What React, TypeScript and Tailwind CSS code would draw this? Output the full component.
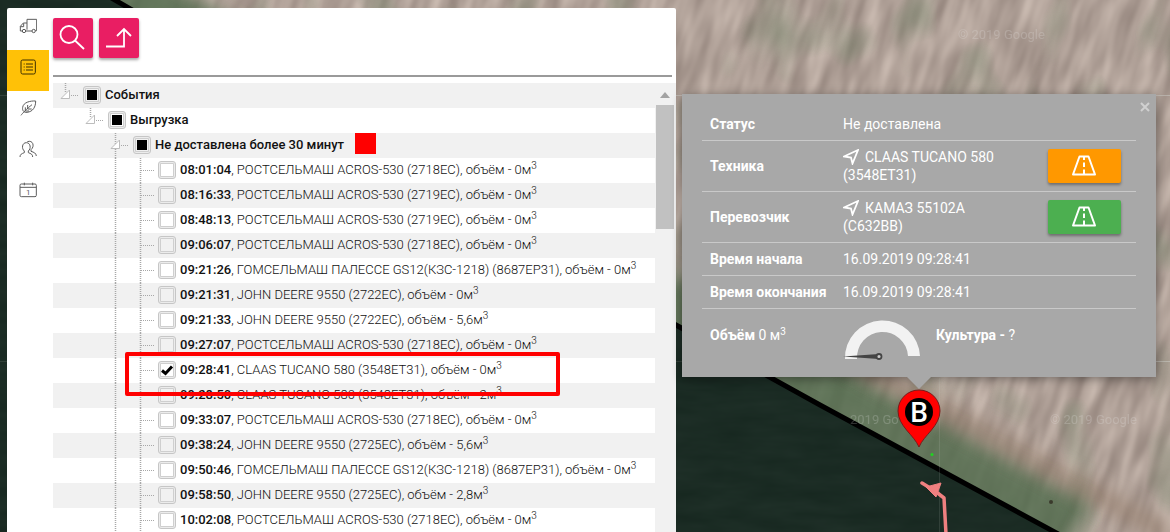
import { useEffect, useRef, useState } from "react";
import type { ReactNode } from "react";

type TreeEvent = {
  time: string;
  machine: string;
  volume: string;
  checked?: boolean;
};

const events: TreeEvent[] = [
  { time: "08:01:04", machine: "РОСТСЕЛЬМАШ ACROS-530 (2718ЕС)", volume: "0" },
  { time: "08:16:33", machine: "РОСТСЕЛЬМАШ ACROS-530 (2719ЕС)", volume: "0" },
  { time: "08:48:13", machine: "РОСТСЕЛЬМАШ ACROS-530 (2719ЕС)", volume: "0" },
  { time: "09:06:07", machine: "РОСТСЕЛЬМАШ ACROS-530 (2718ЕС)", volume: "0" },
  { time: "09:21:26", machine: "ГОМСЕЛЬМАШ ПАЛЕССЕ GS12(КЗС-1218) (8687ЕР31)", volume: "0" },
  { time: "09:21:31", machine: "JOHN DEERE 9550 (2722ЕС)", volume: "0" },
  { time: "09:21:33", machine: "JOHN DEERE 9550 (2722ЕС)", volume: "5,6" },
  { time: "09:27:07", machine: "РОСТСЕЛЬМАШ ACROS-530 (2718ЕС)", volume: "0" },
  { time: "09:28:41", machine: "CLAAS TUCANO 580 (3548ЕТ31)", volume: "0", checked: true },
  { time: "09:28:50", machine: "CLAAS TUCANO 580 (3548ЕТ31)", volume: "2" },
  { time: "09:33:07", machine: "РОСТСЕЛЬМАШ ACROS-530 (2718ЕС)", volume: "0" },
  { time: "09:38:24", machine: "JOHN DEERE 9550 (2725ЕС)", volume: "5,6" },
  { time: "09:50:46", machine: "ГОМСЕЛЬМАШ ПАЛЕССЕ GS12(КЗС-1218) (8687ЕР31)", volume: "0" },
  { time: "09:58:50", machine: "JOHN DEERE 9550 (2725ЕС)", volume: "2,8" },
  { time: "10:02:08", machine: "РОСТСЕЛЬМАШ ACROS-530 (2718ЕС)", volume: "0" },
];

const navItems: { label: string; icon: ReactNode }[] = [
  {
    label: "Техника",
    icon: (
      <>
        <path d="M24 38V7H53V41H49M39 42H20M10 42H4V28L13 18H24M4 29H14V19" />
        <circle cx="15" cy="42" r="5" />
        <circle cx="44" cy="42" r="5" />
      </>
    ),
  },
  {
    label: "События",
    icon: (
      <>
        <rect x="6" y="6" width="43" height="42" rx="5" />
        <path d="M14 18h3M14 27h3M14 36h3M21 18h21M21 27h21M21 36h21" />
      </>
    ),
  },
  {
    label: "Поля",
    icon: (
      <>
        <path d="M50 6C34 5 13 10 11 25C9 36 16 41 24 40C42 38 50 24 50 6Z" />
        <path d="M6 49C10 43 24 29 39 17M26 18V30H38M19 25V36H30" />
      </>
    ),
  },
  {
    label: "Сотрудники",
    icon: (
      <>
        <path d="M3 51C3 43 8 41 16 38V33C7 26 9 8 22 8C35 8 37 26 28 33V38C36 41 41 43 41 51" />
        <path d="M25 5C42 -1 48 19 36 29V34C45 37 51 39 52 48" />
      </>
    ),
  },
  {
    label: "Календарь",
    icon: (
      <>
        <rect x="3" y="9" width="49" height="38" rx="4" />
        <path d="M3 19H52M16 5V13M41 5V13" />
        <text x="28" y="42" textAnchor="middle" fontSize="24" fill="currentColor" stroke="none">
          1
        </text>
      </>
    ),
  },
];

function MapCanvas() {
  return (
    <svg
      className="absolute inset-0 h-full w-full"
      viewBox="0 0 1170 532"
      preserveAspectRatio="xMidYMid slice"
      aria-hidden="true"
    >
      <defs>
        <filter id="soil" x="0" y="0" width="100%" height="100%" colorInterpolationFilters="sRGB">
          <feTurbulence type="fractalNoise" baseFrequency="0.07 0.018" numOctaves="2" seed="8" />
          <feColorMatrix values="0.3 0 0 0 0.54  0.3 0 0 0 0.48  0.29 0 0 0 0.45  0 0 0 0 1" />
        </filter>
        <filter id="patches" x="0" y="0" width="100%" height="100%" colorInterpolationFilters="sRGB">
          <feTurbulence type="fractalNoise" baseFrequency="0.02 0.014" numOctaves="2" seed="5" />
          <feColorMatrix values="0 0 0 0 0.44  0 0 0 0 0.5  0 0 0 0 0.4  3 0 0 0 -1.600" />
        </filter>
        <filter id="crop" x="0" y="0" width="100%" height="100%" colorInterpolationFilters="sRGB">
          <feTurbulence type="fractalNoise" baseFrequency="0.02 0.08" numOctaves="3" seed="3" />
          <feColorMatrix values="0.04 0 0 0 0.085  0.04 0 0 0 0.15  0.04 0 0 0 0.12  0 0 0 0 1" />
        </filter>
        <filter id="soft">
          <feGaussianBlur stdDeviation="9" />
        </filter>
        <clipPath id="field">
          <path d="M0 0H112L676 325L820 404L1055 532H0Z" />
        </clipPath>
      </defs>
      <g transform="rotate(17 900 260)">
        <rect x="-100" y="-400" width="1700" height="1300" filter="url(#soil)" />
      </g>
      <rect width="1170" height="532" filter="url(#patches)" opacity="0.5" />
      <path d="M115 -10L676 315L820 392L1075 532" fill="none" stroke="#4f6b4b" strokeWidth="66" opacity="0.8" filter="url(#soft)" />
      <path d="M700 275L850 360L1170 535" fill="none" stroke="#8d7462" strokeWidth="16" opacity="0.6" filter="url(#soft)" />
      <g clipPath="url(#field)">
        <rect width="1170" height="532" filter="url(#crop)" />
      </g>
      <path d="M108 -4L676 325L820 405L1062 536" fill="none" stroke="#000" strokeWidth="5" />
      <g stroke="#d8dcd8" strokeWidth="1" opacity="0.4">
        <path d="M676 95.500H1170M1156 361.500H1170" />
        <path d="M0 95.500H7M0 361.500H7M676 361.500H682M939.500 378V532" opacity="0.3" />
      </g>
      <g fill="#eee" opacity="0.2" fontSize="13">
        <text x="958" y="39">© 2019 Google</text>
        <text x="850" y="424">2019 Go</text>
        <text x="1050" y="424">© 2019 Google</text>
      </g>
      <circle cx="1051" cy="502" r="2" fill="#3a3a2c" />
      <circle cx="932" cy="454.500" r="1.500" fill="#1fd51f" />
      <path d="M922 483L935 491L944 498L946 534" fill="none" stroke="#f08080" strokeWidth="3.500" strokeLinecap="round" strokeLinejoin="round" />
      <path d="M926 487L941 483L936 497Z" fill="#f08080" stroke="#f08080" />
    </svg>
  );
}

function MapPin() {
  return (
    <svg className="block h-[60px] w-[46px]" viewBox="0 0 46 60" role="img" aria-label="B">
      <path
        d="M23 58C18 46 2 37 2 22A21 21 0 0 1 44 22C44 37 28 46 23 58Z"
        fill="#f00"
        stroke="#7a1a1a"
        strokeWidth="1"
      />
      <circle cx="23" cy="23" r="14" fill="#000" />
      <text x="23" y="33" textAnchor="middle" fontSize="28" fontWeight="500" fill="#fff" fontFamily="Roboto, sans-serif">
        B
      </text>
    </svg>
  );
}

function Guide() {
  return (
    <svg className="block h-full w-[25px] shrink-0" viewBox="0 0 25 25" fill="none" stroke="#a8a8a8">
      <path d="M7.500 0V25" strokeWidth="1.500" strokeDasharray="1 1" />
    </svg>
  );
}

function Connector({ parent, full }: { parent?: boolean; full?: boolean }) {
  return (
    <svg className="block h-full w-[25px] shrink-0" viewBox="0 0 25 25" fill="none" stroke="#a8a8a8">
      <path d={full ? "M7.500 0V25" : "M7.500 0V9"} strokeWidth="1.500" strokeDasharray="1 1" />
      <path d={parent ? "M13 12.500H21" : "M8 12.500H21"} strokeDasharray="1 1" />
      {parent && <path d="M3 15.500L11.500 7V15.500Z" fill="#fff" stroke="#bdbdbd" strokeLinejoin="round" />}
    </svg>
  );
}

function TreeCheckbox({ id, checked, mixed }: { id: string; checked?: boolean; mixed?: boolean }) {
  const ref = useRef<HTMLInputElement>(null);
  const [on, setOn] = useState(!!checked);

  useEffect(() => {
    if (ref.current) ref.current.indeterminate = !!mixed;
  }, [mixed]);

  return (
    <span className="relative mb-px block size-[18px] shrink-0">
      <input
        ref={ref}
        id={id}
        type="checkbox"
        checked={on}
        onChange={(e) => setOn(e.target.checked)}
        className="block size-[18px] appearance-none rounded-[3px] border border-[#c6c6c6] shadow-[inset_0_0_0_1px_#ececec,inset_0_0_0_2px_#cfcfcf]"
      />
      <svg className="pointer-events-none absolute inset-0 size-[18px]" viewBox="0 0 18 18">
        {mixed && <rect x="4" y="4" width="10" height="10" fill="#000" />}
        {on && <path d="M4 9.500L7.500 12.500L14 5.500" fill="none" stroke="#000" strokeWidth="3" />}
      </svg>
    </span>
  );
}

function GroupRow({ level, title, children }: { level: number; title: string; children?: ReactNode }) {
  const indents = ["pl-[5px]", "pl-[30px]", "pl-[55px]"];
  return (
    <li className={`flex h-[25px] items-center odd:bg-[#f1f1f1] ${indents[level]}`}>
      <Connector parent full={level === 2} />
      <TreeCheckbox id={`group-${level}`} mixed />
      <label htmlFor={`group-${level}`} className="ml-1 pb-[2px] font-medium">
        {title}
      </label>
      {children}
    </li>
  );
}

function EventRow({ event, index }: { event: TreeEvent; index: number }) {
  return (
    <li className="relative flex h-[25px] items-center pl-[55px] odd:bg-[#f1f1f1]">
      <Guide />
      <Connector full />
      <TreeCheckbox id={`event-${index}`} checked={event.checked} />
      <label htmlFor={`event-${index}`} className="ml-1 pb-[2px] font-light whitespace-nowrap">
        <b className="font-medium">{event.time}</b>, {event.machine}, объём - {event.volume}м
        <sup className="text-[10px]">3</sup>
      </label>
      {event.checked && (
        <span className="pointer-events-none absolute -top-[6px] left-[72px] z-10 h-[44px] w-[435px] rounded-[2px] border-4 border-[#f00]" />
      )}
    </li>
  );
}

function EventsPanel() {
  return (
    <section className="relative ml-[7px] flex w-4/7 rounded-t-[2px] bg-white">
      <nav className="flex w-[42px] shrink-0 flex-col pt-px">
        {navItems.map((item, index) => (
          <a
            key={item.label}
            href="#"
            aria-label={item.label}
            className={`flex h-[41px] justify-center pt-2 ${index === 1 ? "bg-[#ffc107] text-[#3d2f00]" : "text-[#5c5c5c]"}`}
          >
            <svg className="size-[18px]" viewBox="0 0 54 54" fill="none" stroke="currentColor" strokeWidth="3">
              {item.icon}
            </svg>
          </a>
        ))}
      </nav>

      <div className="ml-1 flex min-w-0 grow flex-col">
        {/* Toolbar */}
        <div className="mr-1 flex h-[69px] shrink-0 gap-[6px] border-b-2 border-[#9a9a9a] pt-[10px]">
          <button type="button" aria-label="Поиск" className="size-10 rounded-[2px] bg-[#e91e63] shadow-[0_2px_3px_rgba(0,0,0,0.35)]">
            <svg className="size-10" viewBox="0 0 40 40" fill="none" stroke="#fff" strokeWidth="1.800">
              <circle cx="16" cy="16.500" r="8.500" />
              <path d="M22 22.500L31 31" />
            </svg>
          </button>
          <button type="button" aria-label="Свернуть" className="size-10 rounded-[2px] bg-[#e91e63] shadow-[0_2px_3px_rgba(0,0,0,0.35)]">
            <svg className="size-10" viewBox="0 0 40 40" fill="none" stroke="#fff" strokeWidth="1.800">
              <path d="M7 28.500H25V11M18 18L25 11L32 18" />
            </svg>
          </button>
        </div>

        {/* Event tree */}
        <div className="mt-[6px] flex min-h-0 grow">
          <ul className="min-w-0 grow overflow-hidden text-[13px] leading-[18px] text-[#111]">
            <GroupRow level={0} title="События" />
            <GroupRow level={1} title="Выгрузка" />
            <GroupRow level={2} title="Не доставлена более 30 минут">
              <span className="ml-[11px] size-[21px] self-start bg-[#f00]" />
            </GroupRow>
            {events.map((event, index) => (
              <EventRow key={event.time} event={event} index={index} />
            ))}
          </ul>
          <div className="flex w-[21px] shrink-0 flex-col items-center bg-[#f1f1f1]">
            <svg className="mt-[9px] h-[6px] w-[10px]" viewBox="0 0 10 6" fill="#a3a3a3">
              <path d="M0 6L5 0L10 6Z" />
            </svg>
            <div className="mt-[7px] h-[124px] w-[18px] bg-[#c1c1c1]" />
          </div>
        </div>
      </div>
    </section>
  );
}

function RouteButton({ label, color }: { label: string; color: string }) {
  return (
    <button
      type="button"
      aria-label={label}
      className={`flex h-[34px] w-[73px] items-center justify-center rounded-[2px] shadow-[0_2px_3px_rgba(0,0,0,0.35)] ${color}`}
    >
      <svg className="h-[22px] w-[26px]" viewBox="0 0 26 22" fill="none" stroke="#fff" strokeWidth="2" strokeLinejoin="round">
        <path d="M8.500 1.500H17.500L24 19.500H2Z" />
        <path d="M13 2V5M13 7.500V12M13 14.500V19.500" />
      </svg>
    </button>
  );
}

function VehicleName({ name, plate }: { name: string; plate: string }) {
  return (
    <>
      <svg className="mr-[6px] inline-block size-4 align-text-bottom" viewBox="0 0 16 16" fill="none" stroke="#fff" strokeWidth="1.800">
        <path d="M15 1L1 7.500L8 8.500L9.500 14.500Z" />
      </svg>
      {name}
      <br />
      {plate}
    </>
  );
}

function Gauge() {
  return (
    <svg className="h-[42px] w-[79px]" viewBox="0 0 79 42" role="img" aria-label="0">
      <path d="M2 40A37.500 37 0 0 1 77 37H65A25 25 0 0 0 14 40Z" fill="#f2f2f2" />
      <path d="M0 37.500L36 35V40Z" fill="#444" />
      <circle cx="36" cy="37.500" r="2.500" fill="#ccc" stroke="#444" strokeWidth="1.800" />
    </svg>
  );
}

function EventPopup() {
  return (
    <div className="absolute top-[94px] left-[682px] flex w-[474px] flex-col items-center">
      <div className="relative w-full bg-[#a8a8a8] px-5 pt-[14px] pb-4 shadow-[0_2px_10px_rgba(0,0,0,0.4)]">
        <button type="button" aria-label="Закрыть" className="absolute top-[7px] right-[5px]">
          <svg className="size-3" viewBox="0 0 12 12" stroke="#d0d0d0" strokeWidth="2">
            <path d="M2 2L10 10M10 2L2 10" />
          </svg>
        </button>
        <table className="w-full table-fixed border-collapse text-left text-[14px] leading-[18px] text-white">
          <colgroup>
            <col className="w-[133px]" />
            <col />
            <col className="w-[96px]" />
          </colgroup>
          <tbody>
            <tr className="border-b border-[#c9c9c9]">
              <th className="px-2 py-[7px]">Статус</th>
              <td className="px-2" colSpan={2}>Не доставлена</td>
            </tr>
            <tr className="border-b border-[#c9c9c9]">
              <th className="px-2 py-[7px]">Техника</th>
              <td className="px-2 py-[7px]">
                <VehicleName name="CLAAS TUCANO 580" plate="(3548ET31)" />
              </td>
              <td className="px-2">
                <RouteButton label="Маршрут техники" color="bg-[#ff9800]" />
              </td>
            </tr>
            <tr className="border-b border-[#c9c9c9]">
              <th className="px-2 py-[7px]">Перевозчик</th>
              <td className="px-2 py-[7px]">
                <VehicleName name="КАМАЗ 55102А" plate="(С632ВВ)" />
              </td>
              <td className="px-2">
                <RouteButton label="Маршрут перевозчика" color="bg-[#4caf50]" />
              </td>
            </tr>
            <tr className="border-b border-[#c9c9c9]">
              <th className="px-2 py-[7px]">Время начала</th>
              <td className="px-2" colSpan={2}>16.09.2019 09:28:41</td>
            </tr>
            <tr className="border-b border-[#c9c9c9]">
              <th className="px-2 py-[7px] whitespace-nowrap">Время окончания</th>
              <td className="px-2" colSpan={2}>16.09.2019 09:28:41</td>
            </tr>
            <tr>
              <th className="px-2">
                Объём <span className="font-normal">0 м<sup className="text-[10px]">3</sup></span>
              </th>
              <td className="px-2 pt-[10px]" colSpan={2}>
                <div className="flex gap-[14px]">
                  <Gauge />
                  <span className="pt-[7px]">
                    <b>Культура -</b> ?
                  </span>
                </div>
              </td>
            </tr>
          </tbody>
        </table>
      </div>
      <svg className="relative block h-3 w-6" viewBox="0 0 24 12" fill="#a8a8a8">
        <path d="M0 0H24L12 12Z" />
      </svg>
      <MapPin />
    </div>
  );
}

export default function App() {
  return (
    <main className="relative flex h-screen overflow-hidden bg-[#1b2b24] pt-2 font-[Roboto,'Liberation_Sans',sans-serif]">
      <MapCanvas />
      <EventsPanel />
      <EventPopup />
    </main>
  );
}
